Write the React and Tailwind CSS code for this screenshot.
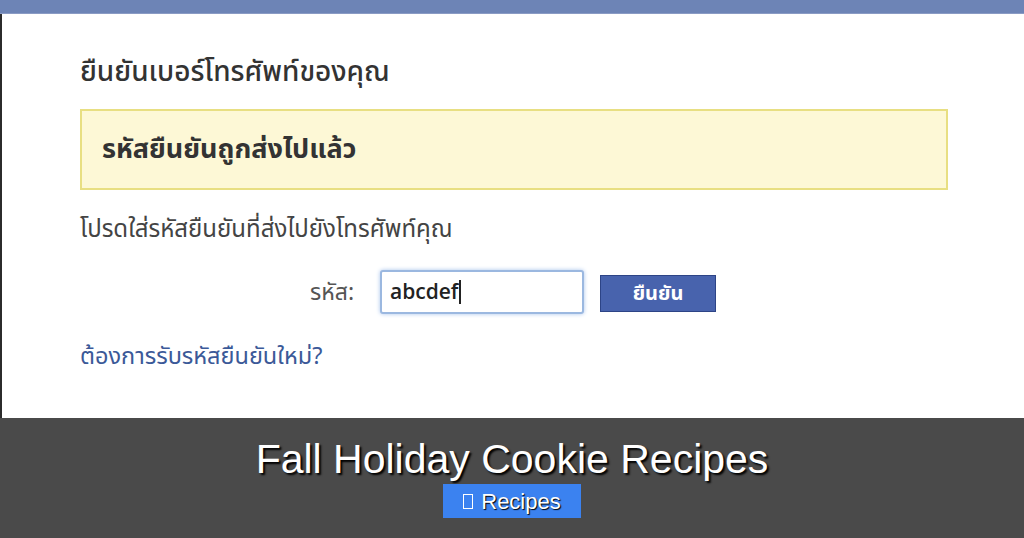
export default function App() {
  const thai = { fontFamily: '"Noto Sans Thai", "Tahoma", "DejaVu Sans", "Noto Sans", sans-serif' };

  return (
    <div className="flex h-[538px] w-[1024px] flex-col overflow-hidden bg-white">
      {/* top header strip */}
      <div className="h-[14px] w-full bg-[#6d84b6] border-b border-[#8a9bc4]" />

      {/* verification panel */}
      <div className="flex flex-1 flex-col border-l-2 border-[#2b2b2b] pl-[78px] pr-[76px] pt-[44px] text-[#333]" style={thai}>
        <h1 className="text-[28px] font-medium leading-[30px] text-[#333]">ยืนยันเบอร์โทรศัพท์ของคุณ</h1>

        <div className="mt-[21px] flex h-[81px] items-center border-2 border-[#e8df82] bg-[#fdf8d6] pl-[20px]">
          <p className="text-[27px] font-bold leading-[30px] text-[#333]">รหัสยืนยันถูกส่งไปแล้ว</p>
        </div>

        <p className="mt-[26px] text-[24px] leading-[28px] text-[#444]">โปรดใส่รหัสยืนยันที่ส่งไปยังโทรศัพท์คุณ</p>

        <div className="mt-[26px] flex items-start">
          <span className="ml-[230px] mt-[6px] w-[70px] text-[23px] text-[#555]">รหัส:</span>
          <div className="flex h-[44px] w-[204px] items-center rounded-[3px] border-2 border-[#9bb8e0] bg-white px-[8px] shadow-[0_0_4px_#a9c4ec]">
            <span className="text-[21px] font-semibold text-[#222]" style={{ fontFamily: '"Open Sans", "DejaVu Sans", sans-serif' }}>abcdef</span>
            <span className="ml-[1px] h-[24px] w-[2px] bg-[#222]" />
          </div>
          <button className="ml-[16px] mt-[5px] flex h-[37px] w-[116px] items-center justify-center border border-[#2d4486] bg-[#4863ad] text-[20px] font-bold text-white">
            ยืนยัน
          </button>
        </div>

        <a href="#" className="mt-[28px] text-[23.5px] leading-[30px] text-[#3b5998]">ต้องการรับรหัสยืนยันใหม่?</a>
      </div>

      {/* caption band */}
      <div className="flex h-[120px] flex-col items-center bg-[#4a4a4a] pt-[18px]" style={{ fontFamily: '"Liberation Sans", Arial, sans-serif' }}>
        <h2 className="text-[41px] leading-[46px] text-white [text-shadow:2px_2px_2px_#000]">Fall Holiday Cookie Recipes</h2>
        <span className="mt-[2px] flex h-[34px] w-[138px] items-center justify-center gap-[8px] bg-[#3b82f0] text-[22px] text-white [text-shadow:1px_1px_1px_#000]">
          <span className="inline-block h-[15px] w-[10px] border border-white" />
          Recipes
        </span>
      </div>
    </div>
  );
}
